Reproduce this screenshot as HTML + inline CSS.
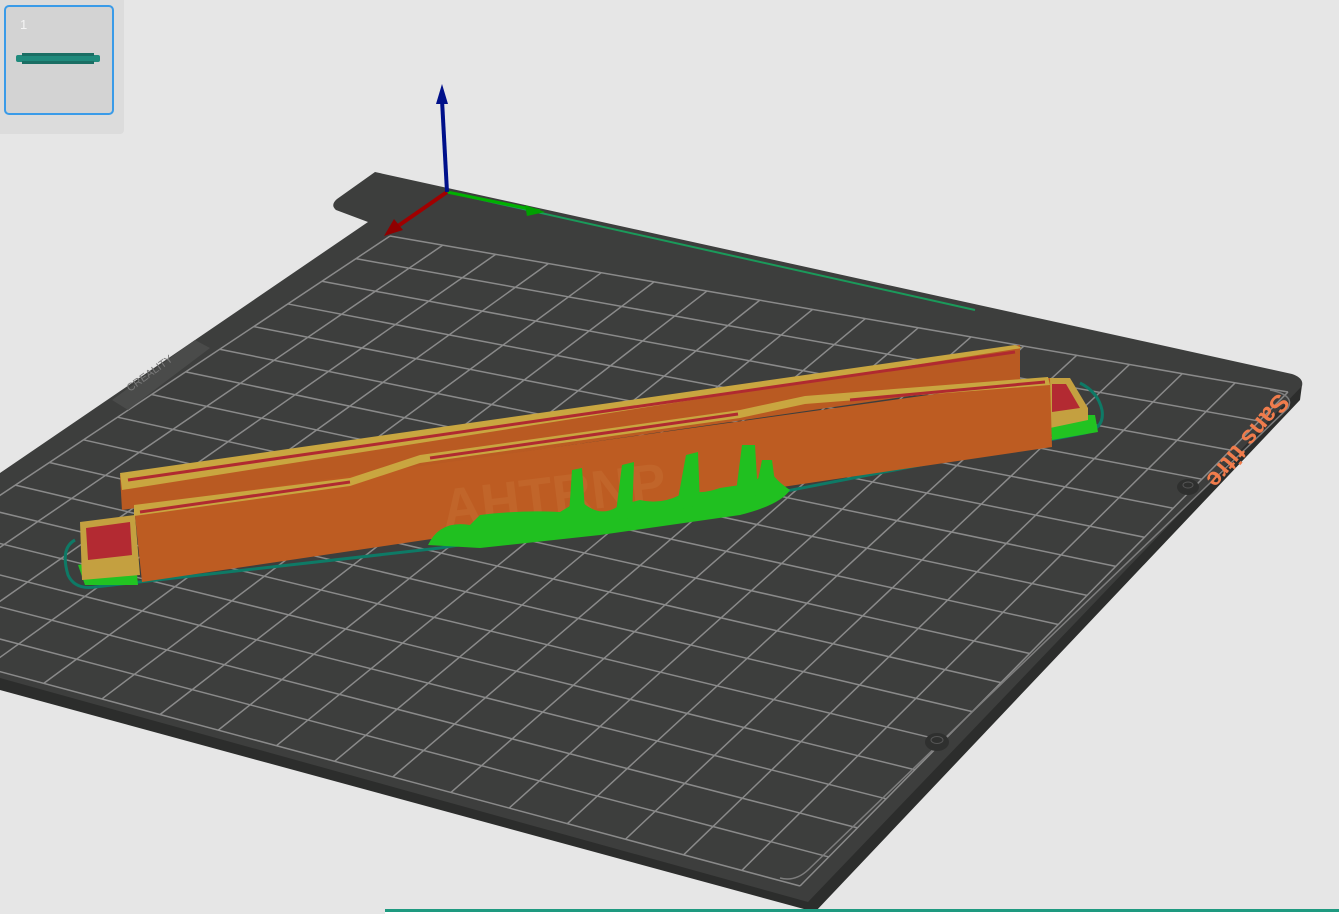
<!DOCTYPE html>
<html><head><meta charset="utf-8"><style>
html,body{margin:0;padding:0;width:1339px;height:914px;overflow:hidden;background:#e6e6e6;font-family:"Liberation Sans",sans-serif}
svg{position:absolute;left:0;top:0}
#panel{position:absolute;left:0;top:0;width:124px;height:134px;background:#dcdcdc;border-radius:0 0 4px 0}
#card{position:absolute;left:4px;top:5px;width:106px;height:106px;background:#d3d3d3;border:2px solid #3a9be8;border-radius:5px}
#card span{position:absolute;left:14px;top:10px;color:#f4f4f4;font-size:13px}
</style></head><body>
<svg width="1339" height="914" viewBox="0 0 1339 914">
<polygon points="1302,385 1300,400 815,912 0,690 0,673 808,895" fill="#2c2d2c"/>
<path d="M375,172 L1292,374 Q1304,378 1302,386 L808,902 L0,678 L0,473 L368,222 L336,210 Q330,205 337,199 Z" fill="#3d3e3d"/>
<g id="grid" stroke="#8a8a8a" stroke-width="1.5" fill="none"></g>
<path d="M1270,390 Q1295,395 1288,408 L808,870 Q795,882 780,878" stroke="#7d7d7d" stroke-width="1.5" fill="none"/>
<polygon points="112,400 195,340 210,348 128,410" fill="#4a4b4a"/>
<text x="0" y="0" transform="translate(130,392) rotate(-36)" fill="#7a7a7a" font-size="11">CREALITY</text>
<text x="0" y="0" transform="translate(1278,392) rotate(130)" fill="#f07c4c" font-size="25" font-weight="bold">Sans titre</text>
<ellipse cx="1188" cy="487" rx="11" ry="8" fill="#2f302f"/><ellipse cx="1188" cy="485" rx="5" ry="3" fill="none" stroke="#555" />
<ellipse cx="937" cy="742" rx="12" ry="9" fill="#2f302f"/><ellipse cx="937" cy="740" rx="6" ry="3.5" fill="none" stroke="#555"/>
<line x1="447" y1="192" x2="975" y2="310" stroke="#1a9a5a" stroke-width="2"/>
<line x1="447" y1="192" x2="540" y2="211" stroke="#00b000" stroke-width="3"/>
<polygon points="545,212 525,205 527,216" fill="#00a000"/>
<line x1="447" y1="192" x2="398" y2="226" stroke="#a00000" stroke-width="4"/>
<polygon points="384,236 394,219 403,230" fill="#900000"/>
<line x1="447" y1="192" x2="442" y2="100" stroke="#00108a" stroke-width="4"/>
<polygon points="442,84 436,104 448,104" fill="#00108a"/>
<path d="M75,540 Q60,548 68,575 Q75,590 95,587 L440,548 L740,500 L1085,433 Q1105,428 1102,410 Q1098,392 1080,383" stroke="#0e7a66" stroke-width="3" fill="none"/>
<path d="M78,565 L135,555 L138,585 L85,585 Z" fill="#22c322"/>
<path d="M1050,415 L1095,415 L1098,432 L1052,440 Z" fill="#22c322"/>
<polygon points="80,522 135,515 140,575 82,580" fill="#c4a040"/>
<polygon points="86,528 130,522 132,555 88,560" fill="#b32a32"/>
<polygon points="1048,378 1070,378 1088,408 1088,420 1050,428" fill="#c4a040"/>
<polygon points="1052,384 1066,384 1080,408 1052,412" fill="#b32a32"/>
<polygon points="120,475 1020,345 1020,380 122,510" fill="#b95a22"/>
<polygon points="120,473 1015,345 1022,348 122,490" fill="#c9a640"/>
<line x1="128" y1="480" x2="1015" y2="352" stroke="#b02a30" stroke-width="3"/>
<polygon points="134,506 1050,378 1052,447 142,582" fill="#bd5c22"/>
<path d="M134,505 L350,478 L420,455 L740,410 L805,396 L1048,377 L1050,385 L805,404 L740,418 L420,463 L350,486 L134,516 Z" fill="#c9a640"/>
<path d="M140,512 L350,482 M430,458 L738,414 M850,400 L1045,382" stroke="#b02a30" stroke-width="3"/>
<text x="440" y="508" fill="#c9783a" font-size="54" font-weight="bold" transform="rotate(-7 600 480)" opacity="0.35">AHTRNP</text>
<g fill="#20c020">
<path d="M428,545 Q440,520 470,525 L480,515 Q520,510 560,512 L580,500 Q600,520 620,505 L640,500 Q660,505 680,495 L690,490 Q700,495 720,488 L740,485 Q760,480 770,470 Q775,480 790,490 Q780,505 740,515 L600,535 L480,548 Z"/>
<path d="M568,530 L572,470 L582,468 L586,525 Z"/>
<path d="M615,520 L622,465 L634,462 L632,518 Z"/>
<path d="M676,510 L686,455 L698,452 L700,505 Z"/>
<path d="M735,500 L742,445 L755,445 L758,495 Z"/>
<path d="M755,495 L762,460 L772,460 L776,490 Z"/>
</g>
<rect x="385" y="909" width="954" height="5" fill="#ffffff"/>
<rect x="385" y="909" width="954" height="3" fill="#1e9a80"/>
</svg>
<div id="panel"><div id="card"><span>1</span>
<div style="position:absolute;left:10px;top:48px;width:84px;height:7px;background:#1f8a7c;border-radius:2px"></div>
<div style="position:absolute;left:16px;top:46px;width:72px;height:3px;background:#1a6e64"></div>
<div style="position:absolute;left:16px;top:54px;width:72px;height:3px;background:#1a6e64"></div>
</div></div>
<script>
(function(){
var A=[390,236],B=[1288,392],C=[800,886],D=[-189,621];
function lerp(p,q,t){return [p[0]+(q[0]-p[0])*t,p[1]+(q[1]-p[1])*t];}
var g=document.getElementById('grid'),N=17,s='';
for(var i=0;i<=N;i++){var t=i/N;
var p=lerp(A,B,t),q=lerp(D,C,t);s+='M'+p[0]+','+p[1]+'L'+q[0]+','+q[1];
p=lerp(A,D,t);q=lerp(B,C,t);s+='M'+p[0]+','+p[1]+'L'+q[0]+','+q[1];}
var e=document.createElementNS('http://www.w3.org/2000/svg','path');e.setAttribute('d',s);g.appendChild(e);
})();
</script>
</body></html>
